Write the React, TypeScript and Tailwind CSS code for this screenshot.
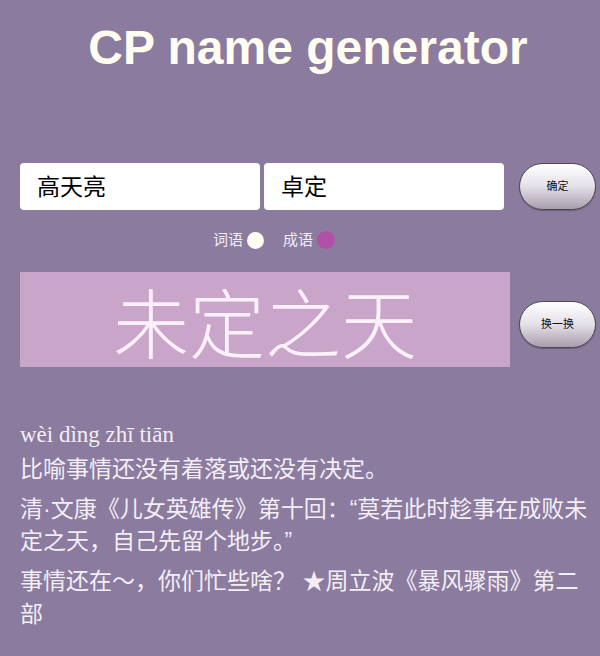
import React from "react";

const cjk = "font-['Liberation_Sans','Noto_Sans_CJK_SC',sans-serif]";

function PillButton({ label }: { label: string }) {
  return (
    <button
      className={`w-[77px] h-[47px] shrink-0 rounded-full border border-[#4d4852] bg-gradient-to-b from-[#ffffff] via-[#e4e0e7] to-[#a79eae] shadow-[0_1px_1px_rgba(0,0,0,0.25)] text-[11px] leading-none text-[#111] ${cjk}`}
    >
      {label}
    </button>
  );
}

export default function App() {
  return (
    <div className={`w-[600px] h-[656px] overflow-hidden bg-[#8b7b9f] ${cjk}`}>
      <h1 className="mt-[24px] pl-[16px] text-center text-[48px] leading-[48px] font-bold text-[#fffcf0] font-['Liberation_Sans',sans-serif]">
        CP name generator
      </h1>

      <div className="mt-[91px] ml-[20px] flex items-center">
        <div className="w-[240px] h-[47px] rounded-[4px] bg-white flex items-center pl-[17px] pt-[2px] text-[23px] text-black">
          高天亮
        </div>
        <div className="ml-[4px] w-[240px] h-[47px] rounded-[4px] bg-white flex items-center pl-[17px] pt-[2px] text-[23px] text-black">
          卓定
        </div>
        <div className="ml-[15px]">
          <PillButton label="确定" />
        </div>
      </div>

      <div className="mt-[21px] ml-[213px] h-[18px] flex items-center text-[15px] text-[#f2ecf4]">
        <span>词语</span>
        <span className="ml-[4px] w-[17px] h-[17px] rounded-full bg-[#fffef2]" />
        <span className="ml-[19px]">成语</span>
        <span className="ml-[4px] w-[18px] h-[18px] rounded-full bg-[#b24fa8]" />
      </div>

      <div className="mt-[23px] ml-[20px] flex items-start">
        <div className="w-[490px] h-[95px] bg-[#c9a5ca] flex items-center justify-center">
          <span className="text-[76px] leading-none font-light text-[#fcf0fb] font-['Noto_Sans_CJK_SC',sans-serif]">
            未定之天
          </span>
        </div>
        <div className="ml-[9px] mt-[29px]">
          <PillButton label="换一换" />
        </div>
      </div>

      <div className="mt-[54px] pl-[20px] w-[600px] text-[#f3eef5]">
        <div className="text-[23px] leading-[28px] font-['Liberation_Serif',serif]">
          wèi dìng zhī tiān
        </div>
        <p className={`mt-[4px] text-[23px] leading-[32px] ${cjk}`}>
          比喻事情还没有着落或还没有决定。
        </p>
        <p className={`mt-[8px] text-[23px] leading-[32px] ${cjk}`}>
          清·文康《儿女英雄传》第十回：“莫若此时趁事在成败未
          <br />
          定之天，自己先留个地步。”
        </p>
        <p className={`mt-[8px] text-[23px] leading-[33px] ${cjk}`}>
          事情还在～，你们忙些啥？ ★周立波《暴风骤雨》第二
          <br />
          部
        </p>
      </div>
    </div>
  );
}
